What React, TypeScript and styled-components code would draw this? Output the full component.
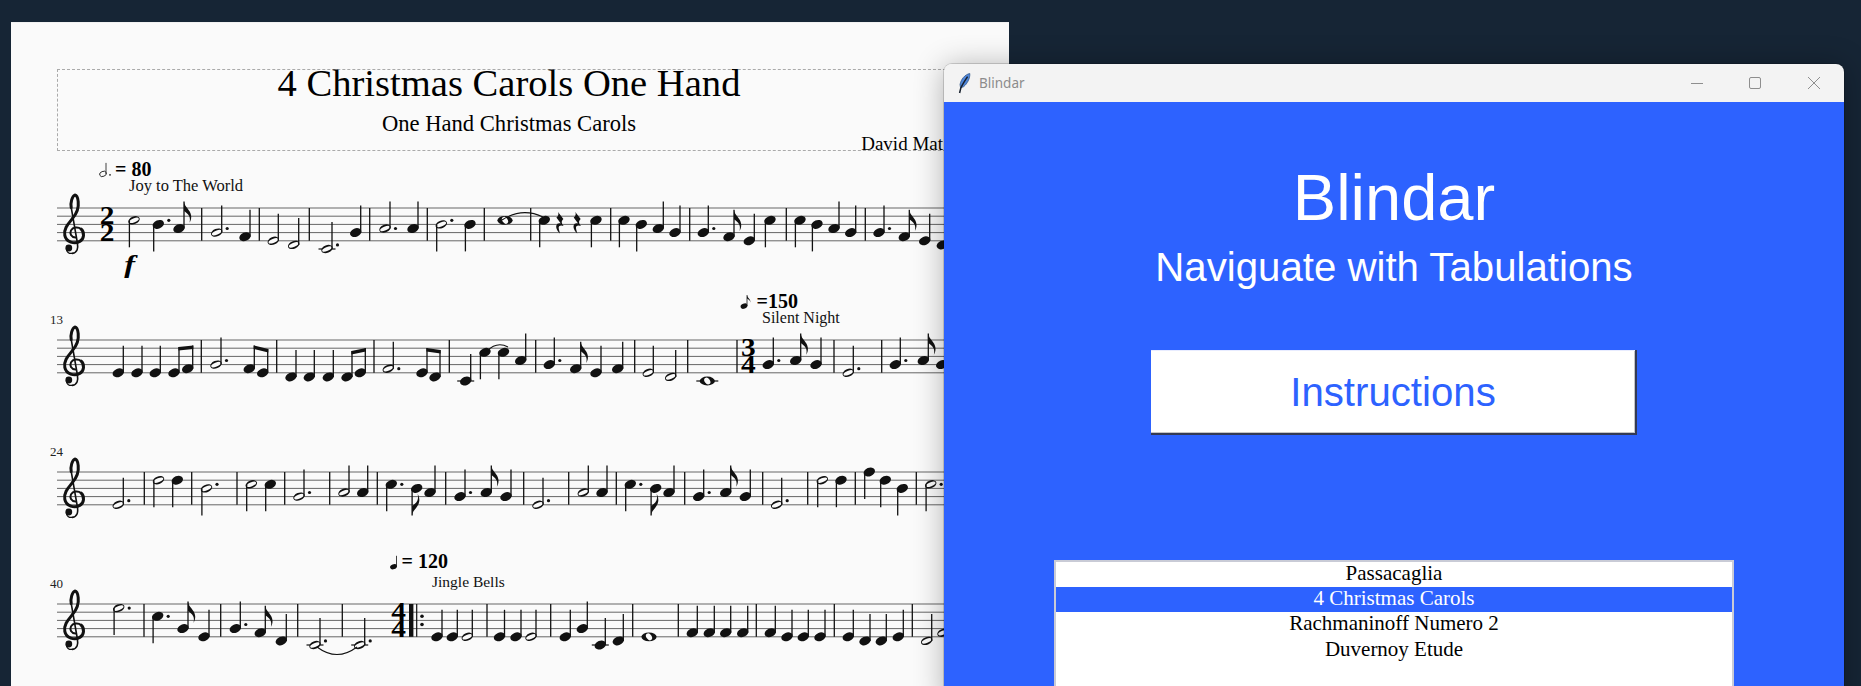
import * as React from 'react';
import styled, { createGlobalStyle } from 'styled-components';

const STEP = 4.1;
const STEM = 27;
const INK = '#111';
const PAPER = '#fafafa';
const DESK = '#162535';
const BLUE = '#2d62ff';

type NoteRow = [string, number, number];

interface StaveData {
    number?: string;
    notes: NoteRow[];
    bars: number[];
    beams?: { left: [number, number]; right: [number, number]; y: [number, number] }[];
    rests?: number[];
    ties?: string[];
    time?: { x: number; top: string; bottom: string };
    song?: { x: number; text: string; size: number };
    tempo?: { x: number; y: number; text: string; note: string; noteX: number };
    repeat?: number;
    dynamic?: { x: number; y: number; text: string };
}

const staves: StaveData[] = [
    {
        time: { x: 107, top: '2', bottom: '2' },
        song: { x: 129, text: 'Joy to The World', size: 16.5 },
        tempo: { x: 115, y: -32.5, text: '= 80', note: 'h.', noteX: 103 },
        dynamic: { x: 126, y: 65, text: 'f' },
        bars: [201.7, 259.3, 309.3, 369.7, 427.3, 484.3, 530.7, 610.7, 689.7, 786.3, 865.3],
        rests: [560, 577.3],
        ties: ['M502 12 Q522 -1 543 9'],
        notes: [
            ['hd', 134, 3], ['qd.', 158.3, 4], ['e', 179, 5],
            ['h.', 216.7, 6], ['q', 245, 7],
            ['h', 273.3, 8], ['h', 293.7, 9],
            ['h.', 327, 10], ['q', 355.7, 6],
            ['h.', 385, 5], ['q', 413, 5],
            ['hd.', 441.3, 4], ['qd', 470, 4],
            ['w', 505, 3],
            ['qd', 544.3, 3], ['qd', 596, 3],
            ['qd', 624, 3], ['qd', 641.3, 4], ['q', 658.3, 5], ['q', 675, 6],
            ['q.', 703.3, 6], ['e', 729, 7], ['q', 749.3, 8], ['qd', 770, 3],
            ['qd', 800, 3], ['qd', 817, 4], ['q', 834, 5], ['q', 850.7, 6],
            ['q.', 879, 6], ['e', 904.3, 7], ['q', 924.7, 8], ['q', 942.3, 9],
        ],
    },
    {
        number: '13',
        song: { x: 762, text: 'Silent Night', size: 16 },
        tempo: { x: 756.5, y: -32.3, text: '=150', note: 'e', noteX: 744 },
        time: { x: 748.3, top: '3', bottom: '4' },
        bars: [201.3, 276.7, 374, 449.3, 535.7, 634.7, 687.7, 737, 834, 881.7],
        ties: ['M487 11 Q497 1 508 7'],
        beams: [
            { left: [174, 8], right: [187.7, 7], y: [7, 5.5] },
            { left: [249.3, 7], right: [262.7, 8], y: [5.5, 9] },
            { left: [347, 9], right: [360.3, 8], y: [11, 8] },
            { left: [422, 8], right: [435, 9], y: [8, 10] },
        ],
        notes: [
            ['q', 118.3, 8], ['q', 137, 8], ['q', 155.3, 8],
            ['h.', 216, 6],
            ['q', 291, 9], ['q', 309.3, 9], ['q', 328.3, 9],
            ['h.', 388.3, 7],
            ['q', 465.7, 10], ['qd', 485, 3], ['qd', 503.5, 3], ['q', 520.7, 5],
            ['q.', 549.3, 6], ['e', 575.7, 7], ['q', 596, 8], ['q', 617.7, 7],
            ['h', 648.3, 8], ['h', 670.7, 9],
            ['w', 707.3, 10],
            ['q.', 768.3, 6], ['e', 795.7, 5], ['q', 816, 6],
            ['h.', 848.3, 8],
            ['q.', 895.3, 6], ['e', 923.3, 5], ['q', 941.7, 6],
        ],
    },
    {
        number: '24',
        bars: [144.3, 191.7, 237, 284.7, 329.7, 377.3, 445.7, 523.7, 568.7, 616.3, 684.7, 762.7, 807.7, 855.3, 916.3],
        notes: [
            ['h.', 118.3, 8],
            ['hd', 158.5, 2], ['qd', 177.3, 2],
            ['hd.', 206.5, 4],
            ['hd', 251.3, 3], ['qd', 270.3, 3],
            ['h.', 299, 6],
            ['h', 344, 5], ['q', 362.7, 5],
            ['qd.', 391.3, 3], ['ed', 416.7, 4], ['q', 430, 5],
            ['q.', 460, 6], ['e', 486.3, 5], ['q', 506, 6],
            ['h.', 538, 8],
            ['h', 583.3, 5], ['q', 602, 5],
            ['qd.', 630.3, 3], ['ed', 655.7, 4], ['q', 669, 5],
            ['q.', 698.7, 6], ['e', 725.7, 5], ['q', 745.3, 6],
            ['h.', 776.7, 8],
            ['hd', 822.3, 2], ['qd', 841, 2],
            ['qd', 869.3, 0], ['qd', 885.3, 2], ['qd', 902.3, 4],
            ['hd.', 930.7, 3],
        ],
    },
    {
        number: '40',
        song: { x: 432, text: 'Jingle Bells', size: 15.5 },
        tempo: { x: 401.5, y: -35.6, text: '= 120', note: 'q', noteX: 393.5 },
        time: { x: 398.7, top: '4', bottom: '4' },
        repeat: 411,
        bars: [144, 220.7, 297.7, 342.3, 487, 550.7, 632.7, 678.3, 756.3, 834.3, 912.3],
        ties: ['M317 43 Q337 58 357 43'],
        notes: [
            ['hd.', 118.7, 1],
            ['qd.', 157.7, 3], ['e', 183, 6], ['q', 204, 8],
            ['q.', 235.3, 6], ['e', 260.3, 7], ['q', 281.3, 9],
            ['h.', 315, 10],
            ['h.', 359.7, 10],
            ['q', 437, 8], ['q', 452.3, 8], ['h', 467.3, 8],
            ['q', 499.5, 8], ['q', 516, 8], ['h', 531, 8],
            ['q', 565.3, 8], ['q', 582.3, 6], ['q', 600.3, 10], ['q', 618.3, 9],
            ['w', 649, 8],
            ['q', 692.3, 7], ['q', 709.3, 7], ['q', 725.7, 7], ['q', 742.7, 7],
            ['q', 770.3, 7], ['q', 787, 8], ['q', 803.3, 8], ['q', 820, 8],
            ['q', 848.3, 8], ['q', 865, 9], ['q', 881.3, 9], ['q', 898.3, 8],
            ['h', 926.7, 9], ['h', 943, 7],
        ],
    },
];

const songs = ['Passacaglia', '4 Christmas Carols', 'Rachmaninoff Numero 2', 'Duvernoy Etude'];

const GlobalStyle = createGlobalStyle`
    html, body {
        margin: 0;
        height: 100%;
        overflow: hidden;
        background: ${DESK};
    }
`;

const Desktop = styled.div`
    position: relative;
    height: 686px;
    overflow: hidden;
    background: ${DESK};
    padding-top: 22px;
    box-sizing: border-box;
`;

const Sheet = styled.div`
    margin-left: 11px;
    width: 998px;
    height: 664px;
    padding: 47px 48px 0 46px;
    box-sizing: border-box;
    background: ${PAPER};
    box-shadow: inset 0 1px 0 #f1f1f1;
    font-family: 'Liberation Serif', serif;
    color: #000;
`;

const TitleBlock = styled.header`
    height: 82px;
    box-sizing: border-box;
    border: 1px dashed #aaa;
    display: flex;
    flex-direction: column;
    align-items: center;
    margin-bottom: 6.5px;
`;

const Title = styled.div`
    font-size: 38.6px;
    line-height: 34px;
    height: 34px;
    margin-top: -4px;
`;

const Subtitle = styled.div`
    font-size: 22.6px;
    line-height: 24px;
    margin-top: 12px;
`;

const Composer = styled.div`
    align-self: flex-end;
    font-size: 19px;
    line-height: 20px;
    margin: -2px 17px 0 0;
`;

const StaveSvg = styled.svg`
    display: block;
    overflow: visible;
`;

const Song = styled.text<{ $size: number }>`
    font-family: 'Liberation Serif', serif;
    font-size: ${(p) => p.$size}px;
    fill: #111;
`;

const TempoText = styled.text`
    font-family: 'Liberation Serif', serif;
    font-size: 20px;
    font-weight: bold;
    fill: #000;
`;

const MeasureNumber = styled.text`
    font-family: 'Liberation Serif', serif;
    font-size: 13px;
    fill: #222;
`;

const TimeDigit = styled.text`
    font-family: 'Liberation Serif', serif;
    font-size: 24.5px;
    font-weight: bold;
    text-anchor: middle;
    fill: #000;
    transform-box: fill-box;
    transform-origin: center;
    transform: scaleX(1.2);
`;

const Dynamic = styled.text`
    font-family: 'Liberation Serif', serif;
    font-size: 25px;
    font-weight: bold;
    font-style: italic;
    fill: #000;
    transform-box: fill-box;
    transform-origin: center;
    transform: scaleX(1.3);
`;

const WindowShadow = styled.div`
    position: absolute;
    left: 944px;
    top: 64px;
    width: 900px;
    height: 640px;
    border-radius: 8px 8px 0 0;
    box-shadow: 0 0 0 1px rgba(0, 0, 0, 0.15), 0 2px 30px rgba(0, 0, 0, 0.3);
`;

const Window = styled.section`
    position: absolute;
    left: 944px;
    top: 64px;
    width: 900px;
    height: 640px;
    display: flex;
    flex-direction: column;
    border-radius: 8px 8px 0 0;
    overflow: hidden;
`;

const TitleBar = styled.div`
    flex: 0 0 38px;
    display: flex;
    align-items: center;
    background: #f3f3f3;
    padding: 0 1px 0 14px;
`;

const AppName = styled.span`
    font-family: 'Noto Sans', sans-serif;
    font-size: 13.5px;
    color: #8c8c8c;
    margin-left: 8px;
    flex: 1;
`;

const WindowButton = styled.div`
    width: 58.5px;
    height: 38px;
    display: flex;
    align-items: center;
    justify-content: center;
`;

const WindowBody = styled.div`
    flex: 1;
    background: ${BLUE};
    color: #fff;
    font-family: 'Liberation Sans', sans-serif;
    display: flex;
    flex-direction: column;
    align-items: center;
`;

const AppTitle = styled.h1`
    margin: 59px 0 0;
    font-size: 65px;
    line-height: 74px;
    font-weight: normal;
`;

const AppSubtitle = styled.h2`
    margin: 9.5px 0 0;
    font-size: 40.2px;
    line-height: 46px;
    font-weight: normal;
`;

const InstructionsButton = styled.button`
    margin-top: 59.5px;
    width: 486px;
    height: 85px;
    box-sizing: border-box;
    background: #fff;
    color: ${BLUE};
    font-family: 'Liberation Sans', sans-serif;
    font-size: 40.2px;
    border: 0;
    border-right: 2px solid #333a55;
    border-bottom: 2px solid #333a55;
    box-shadow: inset 0 1px 0 #e8ecff, inset -1px -1px 0 #c4c4c4;
    padding: 2px 0 0;
`;

const SongList = styled.ul`
    margin: 125px 0 0;
    padding: 0;
    list-style: none;
    width: 680px;
    height: 200px;
    flex-shrink: 0;
    box-sizing: border-box;
    background: #fff;
    border: 2px solid #c9cbd6;
    font-family: 'Liberation Serif', serif;
    font-size: 21px;
    text-align: center;
    color: #000;
`;

const SongRow = styled.li<{ $selected?: boolean }>`
    height: 25.2px;
    line-height: 23.5px;
    background: ${(p) => (p.$selected ? BLUE : 'transparent')};
    color: ${(p) => (p.$selected ? '#fff' : '#000')};
`;

const Head: React.FC<{ kind: string; x: number; y: number }> = ({ kind, x, y }) => {
    if (kind === 'w') {
        return (
            <g>
                <ellipse cx={x} cy={y} rx={7.6} ry={4.4} fill={INK} />
                <ellipse cx={x} cy={y} rx={2.6} ry={3.8} fill={PAPER} transform={`rotate(-35 ${x} ${y})`} />
            </g>
        );
    }
    if (kind === 'h') {
        return (
            <g transform={`rotate(-22 ${x} ${y})`}>
                <ellipse cx={x} cy={y} rx={6} ry={3.8} fill={INK} />
                <ellipse cx={x} cy={y} rx={5.1} ry={2} fill={PAPER} />
            </g>
        );
    }
    return <ellipse cx={x} cy={y} rx={5.9} ry={4.2} fill={INK} transform={`rotate(-22 ${x} ${y})`} />;
};

const Note: React.FC<{ row: NoteRow }> = ({ row }) => {
    const [code, x, p] = row;
    const kind = code[0];
    const down = code.includes('d');
    const dotted = code.includes('.');
    const y = p * STEP;
    const sx = down ? x - 4.6 : x + 5;
    const tip = down ? y + STEM : y - STEM;
    const ledger = kind === 'w' ? 11 : 8.5;
    return (
        <g>
            {p >= 10 && <line x1={x - ledger} x2={x + ledger} y1={41} y2={41} stroke="#222" strokeWidth={1.3} />}
            <Head kind={kind} x={x} y={y} />
            {kind !== 'w' && <line x1={sx} x2={sx} y1={y} y2={tip} stroke={INK} strokeWidth={1.3} />}
            {dotted && <circle cx={x + 10.5} cy={p % 2 === 0 ? y - STEP : y} r={1.6} fill={INK} />}
            {kind === 'e' && !down && (
                <path
                    d={`M${sx} ${tip} c0.6 6 6.6 8 7.2 14.5 c0.2 2.8 -0.6 5 -1.6 6.8 c0.4 -2.4 0.6 -4.6 -0.4 -6.6 c-1.2 -2.4 -3.4 -4 -5.2 -5.2 z`}
                    fill={INK}
                />
            )}
            {kind === 'e' && down && (
                <path
                    d={`M${sx} ${tip} c0.6 -6 6.6 -8 7.2 -14.5 c0.2 -2.8 -0.6 -5 -1.6 -6.8 c0.4 2.4 0.6 4.6 -0.4 6.6 c-1.2 2.4 -3.4 4 -5.2 5.2 z`}
                    fill={INK}
                />
            )}
        </g>
    );
};

const Rest: React.FC<{ x: number }> = ({ x }) => (
    <path
        transform={`translate(${x} 4)`}
        d="M-2 0 L3.4 7 C1.4 9 1 10.5 3.6 14 C1 13 -2 13.4 -1.2 17 L0 21.6 C-3.6 18.4 -5 14 -2.6 11.8 C-1.6 11 -0.4 11 0.8 11.4 L-3.6 5.6 C-1.8 4 -1 2.4 -2 0 Z"
        fill={INK}
    />
);

const TrebleClef: React.FC = () => (
    <g fill="none" stroke={INK} strokeLinecap="round">
        <path d="M75.5 29.5 C71 29 69.5 25.6 71 22.4 C72.8 19 78.2 18.6 81.2 21.2" strokeWidth={2} />
        <path d="M81.2 21.2 C84.8 24.4 84.2 31 79.8 33.4 C74.4 36.4 66.2 34.2 64.8 27.4 C63.4 20.6 68.6 15.4 72.4 10.6" strokeWidth={3} />
        <path d="M72.4 10.6 C76.6 5.6 79 0.2 78.2 -6.4 C77.8 -10.4 76.4 -12.8 75 -13 C72 -11.6 70.4 -5.6 71.2 -0.6" strokeWidth={3} />
        <path d="M71.2 -0.6 L77.4 35 C78.2 40 77.6 44.6 72.4 45.4" strokeWidth={1.6} />
        <circle cx={68.8} cy={40} r={3.4} fill={INK} stroke="none" />
        <path d="M72.4 45.4 C69 45.8 66.2 44 66.4 40.6" strokeWidth={1.3} />
    </g>
);

const TempoNote: React.FC<{ note: string; x: number; y: number }> = ({ note, x, y }) => (
    <g>
        <ellipse
            cx={x}
            cy={y}
            rx={3.5}
            ry={2.5}
            fill={note[0] === 'h' ? 'none' : INK}
            stroke={INK}
            strokeWidth={note[0] === 'h' ? 0.8 : 0}
            transform={`rotate(-22 ${x} ${y})`}
        />
        <line x1={x + 3} x2={x + 3} y1={y} y2={y - 11} stroke={INK} strokeWidth={0.8} />
        {note.includes('.') && <circle cx={x + 7} cy={y + 1} r={0.8} fill={INK} />}
        {note[0] === 'e' && <path d={`M${x + 3} ${y - 11} c0.4 3 3.6 4 3.6 7.4 c-0.6 -2.2 -2 -3.2 -3.6 -4 z`} fill={INK} />}
    </g>
);

const Stave: React.FC<{ data: StaveData }> = ({ data }) => (
    <StaveSvg width={904} height={132} viewBox="57 -50 904 132">
        {[0, 2, 4, 6, 8].map((p) => (
            <line key={p} x1={57} x2={961} y1={p * STEP} y2={p * STEP} stroke="#666" strokeWidth={1} />
        ))}
        <TrebleClef />
        {data.number && <MeasureNumber x={50} y={-16}>{data.number}</MeasureNumber>}
        {data.tempo && (
            <g>
                <TempoNote note={data.tempo.note} x={data.tempo.noteX} y={data.tempo.y - 1.6} />
                <TempoText x={data.tempo.x} y={data.tempo.y}>{data.tempo.text}</TempoText>
            </g>
        )}
        {data.song && <Song $size={data.song.size} x={data.song.x} y={-16.6}>{data.song.text}</Song>}
        {data.time && (
            <g>
                <TimeDigit x={data.time.x} y={16.2}>{data.time.top}</TimeDigit>
                <TimeDigit x={data.time.x} y={32.8}>{data.time.bottom}</TimeDigit>
            </g>
        )}
        {data.bars.map((x) => (
            <line key={x} x1={x} x2={x} y1={0} y2={32.8} stroke={INK} strokeWidth={1.3} />
        ))}
        {data.repeat && (
            <g>
                <rect x={data.repeat - 2} y={0} width={4.4} height={32.8} fill={INK} />
                <line x1={data.repeat + 5.7} x2={data.repeat + 5.7} y1={0} y2={32.8} stroke={INK} strokeWidth={1.2} />
                <circle cx={data.repeat + 11} cy={12.3} r={1.8} fill={INK} />
                <circle cx={data.repeat + 11} cy={20.5} r={1.8} fill={INK} />
            </g>
        )}
        {data.notes.map((row) => (
            <Note key={row[1]} row={row} />
        ))}
        {data.beams?.map((b) => {
            const lx = b.left[0] + 5;
            const rx = b.right[0] + 5;
            return (
                <g key={lx}>
                    <Head kind="q" x={b.left[0]} y={b.left[1] * STEP} />
                    <Head kind="q" x={b.right[0]} y={b.right[1] * STEP} />
                    <line x1={lx} x2={lx} y1={b.left[1] * STEP} y2={b.y[0]} stroke={INK} strokeWidth={1.3} />
                    <line x1={rx} x2={rx} y1={b.right[1] * STEP} y2={b.y[1]} stroke={INK} strokeWidth={1.3} />
                    <polygon
                        points={`${lx - 0.6},${b.y[0]} ${rx + 0.6},${b.y[1]} ${rx + 0.6},${b.y[1] + 3.4} ${lx - 0.6},${b.y[0] + 3.4}`}
                        fill={INK}
                    />
                </g>
            );
        })}
        {data.rests?.map((x) => <Rest key={x} x={x} />)}
        {data.ties?.map((d) => <path key={d} d={d} fill="none" stroke={INK} strokeWidth={1.1} />)}
        {data.dynamic && <Dynamic x={data.dynamic.x} y={data.dynamic.y}>{data.dynamic.text}</Dynamic>}
    </StaveSvg>
);

const FeatherIcon: React.FC = () => (
    <svg width={13} height={21} viewBox="0 0 13 21">
        <path d="M11.8 0.5 C7 1.4 2.8 6.4 2 11.6 L2.6 15 L5.8 13.6 C9.4 10.4 12.2 5.4 11.8 0.5 Z" fill="#4f86da" stroke="#2a4f80" strokeWidth={0.7} />
        <path d="M9.6 3.6 C7 7.4 4.4 11.4 2.8 15 L1.6 20" fill="none" stroke="#161f2c" strokeWidth={1.5} />
    </svg>
);

const App: React.FC = () => (
    <Desktop>
        <GlobalStyle />
        <Sheet>
            <TitleBlock>
                <Title>4 Christmas Carols One Hand</Title>
                <Subtitle>One Hand Christmas Carols</Subtitle>
                <Composer>David Mat</Composer>
            </TitleBlock>
            {staves.map((s, i) => (
                <Stave key={i} data={s} />
            ))}
        </Sheet>
        <WindowShadow />
        <Window>
            <TitleBar>
                <FeatherIcon />
                <AppName>Blindar</AppName>
                <WindowButton>
                    <svg width={14} height={14} viewBox="0 0 14 14">
                        <line x1={1} x2={13} y1={7.5} y2={7.5} stroke="#8e8e8e" strokeWidth={1} />
                    </svg>
                </WindowButton>
                <WindowButton>
                    <svg width={14} height={14} viewBox="0 0 14 14">
                        <rect x={1.5} y={1.5} width={11} height={11} rx={1.5} fill="none" stroke="#8e8e8e" strokeWidth={1} />
                    </svg>
                </WindowButton>
                <WindowButton>
                    <svg width={14} height={14} viewBox="0 0 14 14">
                        <path d="M1 1 L13 13 M13 1 L1 13" stroke="#8e8e8e" strokeWidth={1} />
                    </svg>
                </WindowButton>
            </TitleBar>
            <WindowBody>
                <AppTitle>Blindar</AppTitle>
                <AppSubtitle>Naviguate with Tabulations</AppSubtitle>
                <InstructionsButton>Instructions</InstructionsButton>
                <SongList>
                    {songs.map((name, i) => (
                        <SongRow key={name} $selected={i === 1}>{name}</SongRow>
                    ))}
                </SongList>
            </WindowBody>
        </Window>
    </Desktop>
);

export default App;
